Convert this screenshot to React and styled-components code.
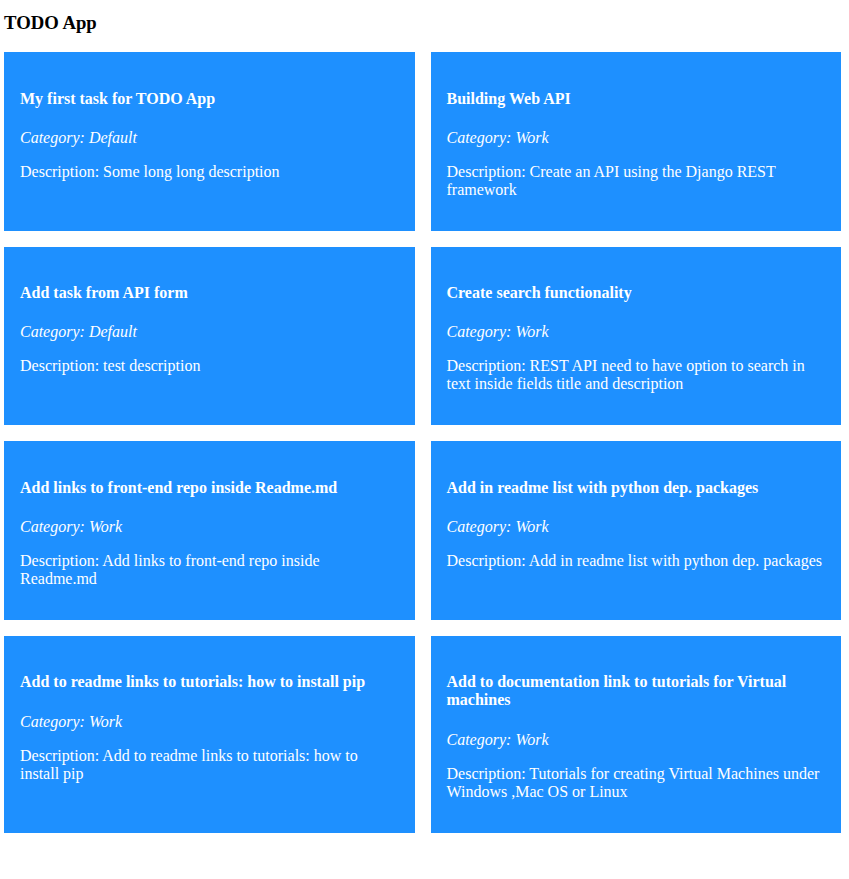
import React from 'react';
import styled, { createGlobalStyle } from 'styled-components';

const tasks = [
  { title: 'My first task for TODO App', category: 'Default', description: 'Some long long description' },
  { title: 'Building Web API', category: 'Work', description: 'Create an API using the Django REST framework' },
  { title: 'Add task from API form', category: 'Default', description: 'test description' },
  { title: 'Create search functionality', category: 'Work', description: 'REST API need to have option to search in text inside fields title and description' },
  { title: 'Add links to front-end repo inside Readme.md', category: 'Work', description: 'Add links to front-end repo inside Readme.md' },
  { title: 'Add in readme list with python dep. packages', category: 'Work', description: 'Add in readme list with python dep. packages' },
  { title: 'Add to readme links to tutorials: how to install pip', category: 'Work', description: 'Add to readme links to tutorials: how to install pip' },
  { title: 'Add to documentation link to tutorials for Virtual machines', category: 'Work', description: 'Tutorials for creating Virtual Machines under Windows ,Mac OS or Linux' },
];

const App = () => (
  <Page>
    <GlobalStyle />
    <Title>TODO App</Title>
    <TaskGrid>
      {tasks.map((task) => (
        <TaskCard key={task.title}>
          <TaskTitle>{task.title}</TaskTitle>
          <Category>Category: {task.category}</Category>
          <Description>Description: {task.description}</Description>
        </TaskCard>
      ))}
    </TaskGrid>
  </Page>
);

const GlobalStyle = createGlobalStyle`
  body {
    margin: 0;
    background: #fff;
    font-family: "Liberation Serif", "Times New Roman", serif;
  }
`;

const Page = styled.div`
  padding: 0 8px 40px 4px;
`;

const Title = styled.h3`
  margin: 0;
  padding: 12px 0 19.4px;
  font-size: 18.72px;
  line-height: 21px;
  font-weight: bold;
  color: #000;
`;

const TaskGrid = styled.div`
  display: grid;
  grid-template-columns: 1fr 1fr;
  gap: 16px;
`;

const TaskCard = styled.div`
  background: #1e90ff;
  color: #fff;
  padding: 16px;
  font-size: 16px;
  line-height: 18px;
`;

const TaskTitle = styled.h4`
  margin: 21.28px 0;
  font-size: 16px;
  font-weight: bold;
`;

const Category = styled.p`
  margin: 16px 0;
  font-style: italic;
`;

const Description = styled.p`
  margin: 16px 0;
`;

export default App;
